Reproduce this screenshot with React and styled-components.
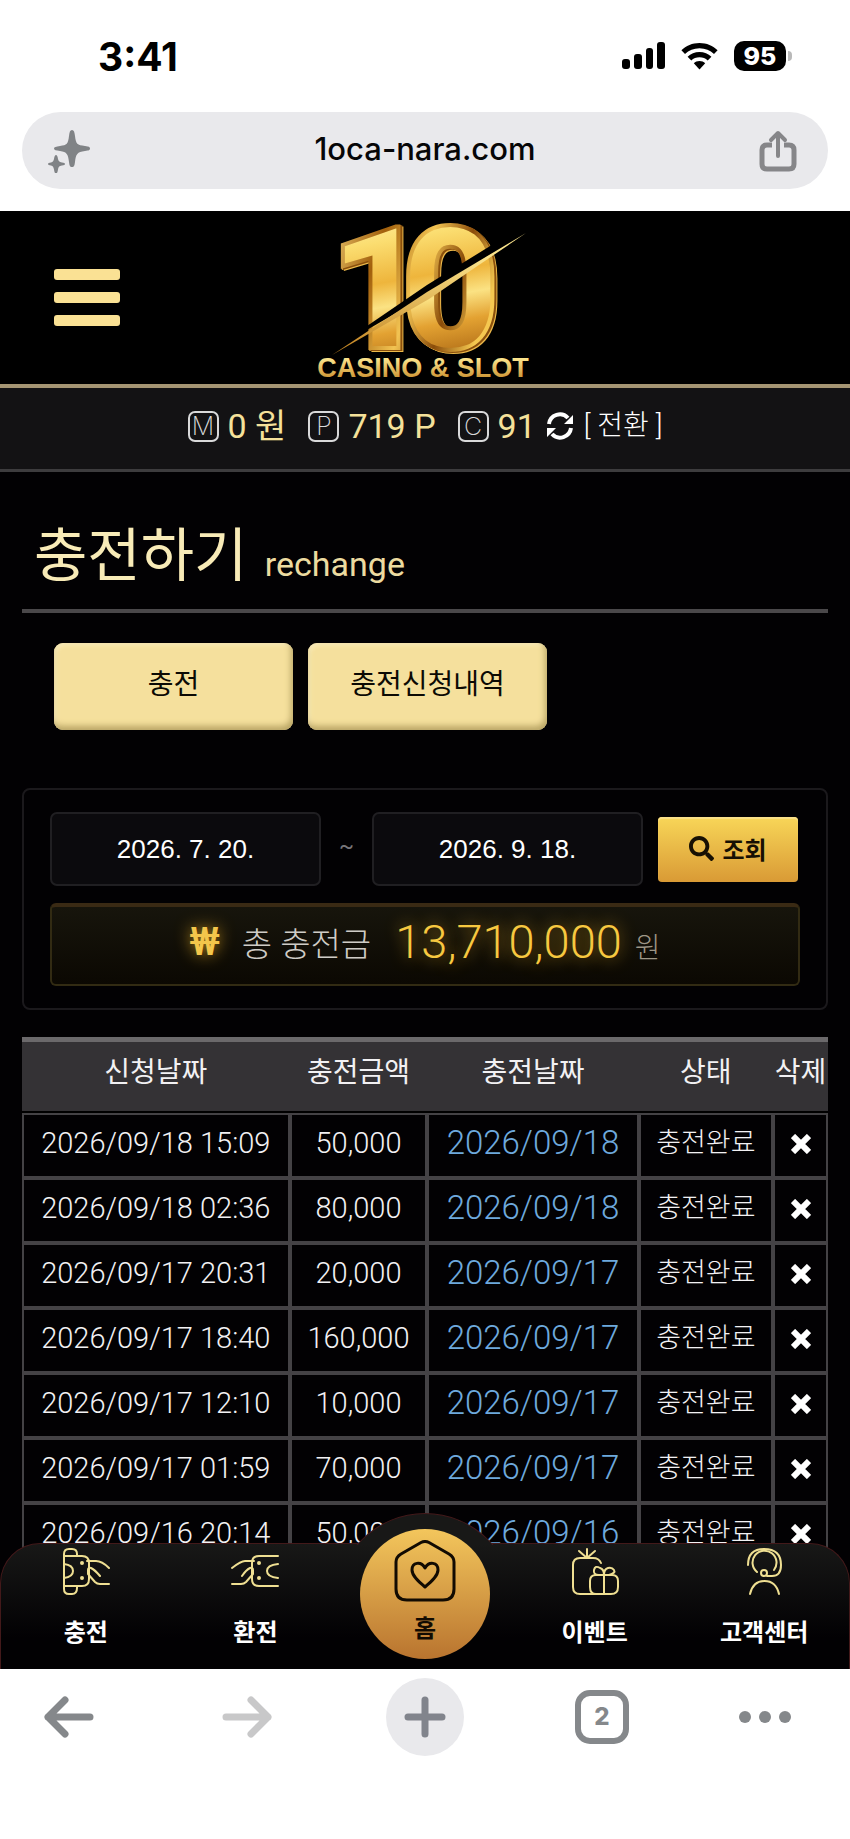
import styled, { createGlobalStyle } from 'styled-components'
import { FaSearch } from 'react-icons/fa'

const ROWS = [
  { requested: '2026/09/18 15:09', amount: '50,000', charged: '2026/09/18' },
  { requested: '2026/09/18 02:36', amount: '80,000', charged: '2026/09/18' },
  { requested: '2026/09/17 20:31', amount: '20,000', charged: '2026/09/17' },
  { requested: '2026/09/17 18:40', amount: '160,000', charged: '2026/09/17' },
  { requested: '2026/09/17 12:10', amount: '10,000', charged: '2026/09/17' },
  { requested: '2026/09/17 01:59', amount: '70,000', charged: '2026/09/17' },
  { requested: '2026/09/16 20:14', amount: '50,000', charged: '2026/09/16' },
]

const App = () => {
  return (
    <Screen>
      <GlobalStyle />
      <StatusBar />
      <AddressBar />
      <Viewport>
        <SiteHeader />
        <Balance />
        <main>
          <ChargePage />
        </main>
        <SiteNav />
      </Viewport>
      <BrowserToolbar />
    </Screen>
  )
}

const StatusBar = () => (
  <StatusRow>
    <Clock>3:41</Clock>
    <StatusIcons>
      <svg width="43" height="28" viewBox="0 0 43 28" fill="#000">
        <rect x="0" y="17" width="8" height="10" rx="3" />
        <rect x="12" y="12" width="8" height="15" rx="3" />
        <rect x="24" y="6" width="7" height="21" rx="3" />
        <rect x="35" y="0" width="8" height="27" rx="3" />
      </svg>
      <svg width="37" height="27" viewBox="0 0 37 27" fill="#000">
        <path d="M18.5 0C25.600 0 32 2.800 36.600 7.300L33 11C29.200 7.300 24.200 5.200 18.500 5.200S7.800 7.300 4 11L.4 7.300C5 2.800 11.400 0 18.500 0Z" />
        <path d="M18.500 9c4.600 0 8.800 1.800 11.900 4.700L26.700 17.400c-2.100-2-5-3.200-8.200-3.200s-6.100 1.200-8.200 3.200L6.600 13.700C9.700 10.800 13.900 9 18.500 9Z" />
        <path d="M18.500 18c2.200 0 4.200.8 5.700 2.200L18.500 26.500 12.800 20.200C14.300 18.800 16.300 18 18.500 18Z" />
      </svg>
      <Battery>95</Battery>
    </StatusIcons>
  </StatusRow>
)

const AddressBar = () => (
  <AddressWrap>
    <AddressPill>
      <IconBTN aria-label="AI">
        <svg width="44" height="44" viewBox="0 0 44 44" fill="#808386">
          <path d="M25 1C27 1 27.500 3 28 7c1 8 2 9 10 10 4 .5 5 1 5 2.500S42 21.500 38 22c-8 1-9 3-10 11-.5 4-1 5-3 5s-2.500-1-3-5c-1-8-2-10-9-11-4-.5-6-1-6-2.500S9 17.500 13 17c7-1 8-2 9-10 .5-4 1-6 3-6Z" />
          <path d="M9 26c1 0 1.500 1 2 4 .5 2 1 3 4 3.500 2 .3 3 .7 3 1.500s-1 1.200-3 1.500c-3 .5-3.500 1.500-4 4-.5 3-1 4-2 4s-1.500-1-2-4c-.5-2.500-1-3.500-3-4-2-.3-3-.7-3-1.500s1-1.200 3-1.500c2-.5 2.500-1.500 3-3.500.5-3 1-4 2-4Z" />
        </svg>
      </IconBTN>
      <Host>1oca-nara.com</Host>
      <IconBTN aria-label="공유">
        <svg width="38" height="42" viewBox="0 0 38 42" fill="none" stroke="#868689" strokeWidth="5" strokeLinecap="round" strokeLinejoin="round">
          <path d="M19 26V4M12 10L19 3L26 10" strokeWidth="4" />
          <path d="M13 15H8Q3 15 3 20V34Q3 39 8 39H30Q35 39 35 34V20Q35 15 30 15H25" strokeLinecap="butt" />
        </svg>
      </IconBTN>
    </AddressPill>
  </AddressWrap>
)

const SiteHeader = () => (
  <Header>
    <MenuBTN aria-label="메뉴">
      <MenuLine />
      <MenuLine />
      <MenuLine />
    </MenuBTN>
    <LogoLink href="#" aria-label="10 CASINO & SLOT">
      <Logo />
    </LogoLink>
  </Header>
)

const Logo = () => (
  <LogoSVG viewBox="0 0 220 164">
    <defs>
      <linearGradient id="face" x1="0" y1="0" x2="0.15" y2="1">
        <stop offset="0.1" stopColor="#fff3b0" />
        <stop offset="0.3" stopColor="#fbdd70" />
        <stop offset="0.5" stopColor="#eeb53c" />
        <stop offset="0.62" stopColor="#fbe283" />
        <stop offset="0.75" stopColor="#e3a232" />
        <stop offset="0.9" stopColor="#b8751b" />
      </linearGradient>
      <linearGradient id="rim" x1="0" y1="0" x2="1" y2="0.4">
        <stop offset="0" stopColor="#ffe389" />
        <stop offset="0.35" stopColor="#a2600c" />
        <stop offset="0.6" stopColor="#f2c352" />
        <stop offset="0.8" stopColor="#8a4c0a" />
        <stop offset="1" stopColor="#f5c850" />
      </linearGradient>
      <linearGradient id="caption" x1="0" y1="0" x2="0" y2="1">
        <stop offset="0.2" stopColor="#fbe48c" />
        <stop offset="1" stopColor="#c1801d" />
      </linearGradient>
    </defs>
    <Digits y="132" fill="url(#face)" stroke="url(#rim)" strokeWidth="4">
      <tspan x="14">1</tspan>
      <tspan x="86">0</tspan>
    </Digits>
    <path d="M14 136L112 69L206 11L206 19L112 79Z" fill="#000" />
    <path d="M17 139L112 76L211 17L114 83Z" fill="url(#caption)" />
    <Caption x="108" y="161" textAnchor="middle" fill="url(#caption)">CASINO &amp; SLOT</Caption>
  </LogoSVG>
)

const Balance = () => (
  <BalanceBar>
    <BalanceItem><Badge>M</Badge>0 원</BalanceItem>
    <BalanceItem><Badge>P</Badge>719 P</BalanceItem>
    <BalanceItem><Badge>C</Badge>91</BalanceItem>
    <ConvertBTN>
      <svg width="28" height="28" viewBox="0 0 28 28">
        <path d="M3 12A11 11 0 0 1 22 6M25 16A11 11 0 0 1 6 22" fill="none" stroke="#fff" strokeWidth="4" />
        <path d="M27 3V12H18ZM1 25V16H10Z" fill="#fff" />
      </svg>
      [ 전환 ]
    </ConvertBTN>
  </BalanceBar>
)

const ChargePage = () => (
  <Content>
    <PageTitle>
      충전하기 <small>rechange</small>
    </PageTitle>
    <Tabs>
      <TabBTN>충전</TabBTN>
      <TabBTN>충전신청내역</TabBTN>
    </Tabs>
    <SearchPanel>
      <SearchRow>
        <DateInput aria-label="시작일" defaultValue="2026. 7. 20." />
        <Tilde>~</Tilde>
        <DateInput aria-label="종료일" defaultValue="2026. 9. 18." />
        <SearchBTN><FaSearch size={25} />조회</SearchBTN>
      </SearchRow>
      <TotalBar>
        <WonSign>₩</WonSign>
        <TotalLabel>총 충전금</TotalLabel>
        <TotalValue>13,710,000</TotalValue>
        <TotalUnit>원</TotalUnit>
      </TotalBar>
    </SearchPanel>
    <HistoryTable>
      <colgroup>
        <col style={{ width: '33.2%' }} />
        <col style={{ width: '17.1%' }} />
        <col style={{ width: '26.2%' }} />
        <col style={{ width: '16.7%' }} />
        <col />
      </colgroup>
      <thead>
        <tr>
          <th>신청날짜</th>
          <th>충전금액</th>
          <th>충전날짜</th>
          <th>상태</th>
          <th>삭제</th>
        </tr>
      </thead>
      <tbody>
        {ROWS.map(row => (
          <tr key={row.requested}>
            <td>{row.requested}</td>
            <td>{row.amount}</td>
            <ChargedCell>{row.charged}</ChargedCell>
            <StatusCell>충전완료</StatusCell>
            <td>
              <DeleteBTN aria-label="삭제">
                <svg width="20" height="20" viewBox="0 0 20 20" stroke="#fff" strokeWidth="6">
                  <path d="M2 2L18 18M18 2L2 18" />
                </svg>
              </DeleteBTN>
            </td>
          </tr>
        ))}
      </tbody>
    </HistoryTable>
  </Content>
)

const SiteNav = () => (
  <Nav>
    <HomeBump />
    <NavLink href="#">
      <NavIcon viewBox="0 0 48 48">
        <path d="M2 6Q2 1 7 1H10Q15 1 15 6V8M2 6V41Q2 46 7 46H10Q15 46 15 40V38" />
        <path d="M2 8H20Q27 8 27 15V31Q27 38 20 38H2M2 16Q11 17 11 23T2 30" />
        <path d="M25 13H34Q40 13 47 20M26 22Q26 19 29 20Q33 22 38 28M26 22V26L33 34Q35 36 38 36H47" />
        <circle cx="20" cy="15" r="1" />
        <circle cx="20" cy="30" r="1" />
      </NavIcon>
      충전
    </NavLink>
    <NavLink href="#">
      <NavIcon viewBox="0 0 48 48">
        <path d="M47 8H28Q21 8 21 15V31Q21 38 28 38H47M47 16Q36 17 36 23T47 30" />
        <path d="M23 13H14Q10 13 1 20M22 22Q22 19 19 20Q15 22 11 28M22 22V26L15 34Q13 36 10 36H1" />
        <circle cx="28" cy="15" r="1" />
        <circle cx="28" cy="30" r="1" />
      </NavIcon>
      환전
    </NavLink>
    <HomeLink href="#">
      <svg width="62" height="62" viewBox="0 0 62 62" fill="none" stroke="#120b02" strokeWidth="3" strokeLinejoin="round">
        <path d="M27 2.500Q31 .5 35 2.500L55 14Q60 17 60 22V49Q60 60 49 60H13Q2 60 2 49V22Q2 17 7 14Z" />
        <path d="M31 47C25 42 18 36 18 30C18 22 27 21 31 28C35 21 44 22 44 30C44 36 37 42 31 47Z" />
      </svg>
      홈
    </HomeLink>
    <NavLink href="#">
      <NavIcon viewBox="0 0 48 48">
        <path d="M16 10V1M16 10L8 3M16 10L24 3M30 15Q28 10 22 10H9Q2 10 2 17V39Q2 46 9 46H40Q47 46 47 39V33Q47 27 41 27H25Q19 27 19 33V39Q19 46 25 46M33 27V46" />
        <path d="M33 27H28Q22 27 23 22T29 20Q33 21 33 27Q33 21 37 20T43 22T38 27" />
      </NavIcon>
      이벤트
    </NavLink>
    <NavLink href="#">
      <NavIcon viewBox="0 0 48 48">
        <path d="M8 17Q8 1 24 1Q41 1 41 17Q41 28 32 28H27" />
        <path d="M17 24A12 12 0 1 1 34 22" />
        <circle cx="24" cy="25" r="3" />
        <path d="M10 46Q13 33 24.500 33T39 46" />
      </NavIcon>
      고객센터
    </NavLink>
  </Nav>
)

const BrowserToolbar = () => (
  <Toolbar>
    <ToolBTN aria-label="뒤로">
      <svg width="50" height="42" viewBox="0 0 50 42" fill="none" stroke="#85888b" strokeWidth="7" strokeLinecap="round" strokeLinejoin="round">
        <path d="M46 21H4M21 4L4 21L21 38" />
      </svg>
    </ToolBTN>
    <ToolBTN aria-label="앞으로">
      <svg width="50" height="42" viewBox="0 0 50 42" fill="none" stroke="#c8c8c9" strokeWidth="7" strokeLinecap="round" strokeLinejoin="round">
        <path d="M4 21H46M29 4L46 21L29 38" />
      </svg>
    </ToolBTN>
    <ToolBTN aria-label="새 탭">
      <PlusCircle>
        <svg width="42" height="42" viewBox="0 0 42 42" fill="none" stroke="#81848c" strokeWidth="7" strokeLinecap="round">
          <path d="M21 4V38M4 21H38" />
        </svg>
      </PlusCircle>
    </ToolBTN>
    <ToolBTN aria-label="탭"><TabCount>2</TabCount></ToolBTN>
    <ToolBTN aria-label="더보기">
      <svg width="52" height="12" viewBox="0 0 52 12" fill="#85888b">
        <circle cx="6" cy="6" r="6" />
        <circle cx="26" cy="6" r="6" />
        <circle cx="46" cy="6" r="6" />
      </svg>
    </ToolBTN>
  </Toolbar>
)

const GlobalStyle = createGlobalStyle`
  * {
    box-sizing: border-box;
  }

  body {
    margin: 0;
    background-color: #fff;
    font-family: Roboto, "Noto Sans CJK KR", sans-serif;
  }

  button {
    padding: 0;
    border: none;
    background: none;
    font-family: inherit;
    cursor: pointer;
  }

  a {
    color: inherit;
    text-decoration: none;
  }

  svg {
    display: block;
  }
`

const Screen = styled.div`
  display: flex;
  flex-direction: column;
  min-height: 100vh;
`

const StatusRow = styled.div`
  display: flex;
  justify-content: space-between;
  align-items: center;
  height: 112px;
  padding: 0 58px 0 98px;
`

const Clock = styled.span`
  font: 700 39px/1 Inter, sans-serif;
  color: #000;
`

const StatusIcons = styled.div`
  display: flex;
  align-items: center;
  gap: 16px;
`

const Battery = styled.span`
  position: relative;
  width: 52px;
  margin-right: 6px;
  border-radius: 10px;
  background-color: #000;
  color: #fff;
  font: 800 25px/30px Inter, sans-serif;
  text-align: center;

  &::after {
    content: '';
    position: absolute;
    right: -6px;
    top: 10px;
    width: 4px;
    height: 10px;
    border-radius: 0 4px 4px 0;
    background-color: #b9b9b9;
  }
`

const AddressWrap = styled.div`
  padding: 0 22px 22px;
`

const AddressPill = styled.div`
  display: flex;
  justify-content: space-between;
  align-items: center;
  height: 77px;
  padding: 0 31px 0 25px;
  border-radius: 39px;
  background-color: #e9e9ec;
`

const IconBTN = styled.button`
  flex: none;
`

const Host = styled.span`
  padding-bottom: 4px;
  font: 500 31px/1 Inter, sans-serif;
  color: #060607;
`

const Viewport = styled.div`
  position: relative;
  flex: 1;
  overflow: hidden;
  background-color: #020103;
`

const Header = styled.header`
  display: grid;
  grid-template-columns: 1fr auto 1fr;
  align-items: center;
  height: 177px;
  padding: 0 54px;
  border-bottom: 4px solid #a59573;
  background-color: #000;
`

const MenuBTN = styled.button`
  display: flex;
  flex-direction: column;
  gap: 12px;
  width: 66px;
`

const MenuLine = styled.span`
  height: 11px;
  border-radius: 3px;
  background-color: #fae194;
`

const LogoLink = styled.a`
  grid-column: 2;
`

const LogoSVG = styled.svg`
  width: 220px;
  height: 164px;
  overflow: visible;
`

const Digits = styled.text`
  font: 900 170px Roboto, sans-serif;
  filter: drop-shadow(2px 1px 0 #8a500d) drop-shadow(1px 1px 0 #edb94a);
`

const Caption = styled.text`
  font: 700 27px "Liberation Sans", sans-serif;
`

const BalanceBar = styled.div`
  display: flex;
  justify-content: center;
  align-items: flex-start;
  gap: 22px;
  height: 84px;
  padding-top: 18px;
  border-bottom: 3px solid #3d3c3e;
  background-color: #131214;
  color: #f5e19a;
  font-size: 34px;
  line-height: 40px;
`

const BalanceItem = styled.span`
  display: flex;
  align-items: center;
  gap: 9px;
`

const Badge = styled.span`
  width: 31px;
  height: 31px;
  border: 2px solid #d9d9da;
  border-radius: 7px;
  color: #d9d9da;
  font: 200 25px/27px Inter, sans-serif;
  text-align: center;
`

const ConvertBTN = styled.button`
  display: flex;
  align-items: center;
  gap: 10px;
  margin-left: -12px;
  color: #fff;
  font-size: 28px;
  font-weight: 300;
  line-height: 40px;
`

const Content = styled.div`
  padding: 40px 22px 80px;
`

const PageTitle = styled.h1`
  margin: 0;
  padding: 0 12px;
  border-bottom: 4px solid #4a484a;
  color: #f8ebb7;
  font-size: 58px;
  font-weight: 400;
  line-height: 89px;

  small {
    margin-left: 3px;
    font-size: 34px;
    color: #ecdba0;
  }
`

const Tabs = styled.div`
  display: flex;
  gap: 15px;
  padding: 30px 32px 58px;
`

const TabBTN = styled.button`
  width: 239px;
  height: 87px;
  padding-bottom: 10px;
  border-radius: 9px;
  background-color: #f5e09d;
  box-shadow: inset -2px -4px 6px #b9a565, inset 2px 2px 4px #fbeec0;
  color: #0c0a04;
  font-size: 28px;
`

const SearchPanel = styled.section`
  padding: 22px 26px;
  border: 2px solid #1b191c;
  border-radius: 8px;
`

const SearchRow = styled.div`
  display: flex;
  align-items: center;
`

const DateInput = styled.input`
  flex: 1;
  min-width: 0;
  height: 74px;
  border: 2px solid #201f22;
  border-radius: 7px;
  background-color: #0b0a0d;
  color: #fff;
  font: 26px "Liberation Sans", sans-serif;
  text-align: center;
`

const Tilde = styled.span`
  width: 51px;
  padding-bottom: 8px;
  color: #77767a;
  font-size: 22px;
  text-align: center;
`

const SearchBTN = styled.button`
  display: flex;
  justify-content: center;
  align-items: center;
  gap: 8px;
  width: 140px;
  height: 65px;
  margin: 0 2px 0 15px;
  padding-bottom: 2px;
  border-radius: 4px;
  background: linear-gradient(#f8d658, #d99a35);
  box-shadow: inset 0 2px 1px #fae08a;
  color: #171003;
  font-size: 24px;
  font-weight: 700;
`

const TotalBar = styled.div`
  display: flex;
  justify-content: center;
  align-items: center;
  height: 83px;
  margin-top: 17px;
  padding-bottom: 8px;
  border: 2px solid #322b13;
  border-top: 4px solid #3a2a14;
  border-radius: 6px;
  background: linear-gradient(#17150c, #0b0802);
`

const WonSign = styled.span`
  margin-right: 22px;
  color: #f3c64b;
  font-size: 39px;
  font-weight: 500;
  text-shadow: 0 0 16px #b98a1c;
`

const TotalLabel = styled.span`
  margin-right: 24px;
  color: #cfccc6;
  font-size: 33px;
  font-weight: 300;
`

const TotalValue = styled.strong`
  color: #f7c840;
  font-size: 47px;
  font-weight: 300;
  text-shadow: 0 0 16px #b98a1c;
`

const TotalUnit = styled.span`
  margin: 8px 0 0 13px;
  color: #9d9686;
  font-size: 28px;
  font-weight: 300;
`

const HistoryTable = styled.table`
  width: 100%;
  margin-top: 27px;
  border-collapse: separate;
  border-spacing: 0;
  table-layout: fixed;
  color: #f2f1f3;

  th {
    height: 76px;
    padding: 0 0 8px;
    border-top: 5px solid #6b696b;
    border-bottom: 2px solid #000;
    background-color: #343235;
    font-size: 28px;
    font-weight: 400;
    line-height: 40px;
    white-space: nowrap;
  }

  td {
    height: 65px;
    padding: 0 0 6px;
    border: 2px solid #444245;
    font-size: 29px;
    font-weight: 300;
    line-height: 40px;
    text-align: center;
    white-space: nowrap;
  }
`

const ChargedCell = styled.td`
  && {
    color: #6ea9dd;
    font-size: 33px;
  }
`

const StatusCell = styled.td`
  && {
    font-size: 27px;
  }
`

const DeleteBTN = styled.button`
  display: block;
  margin: 2px auto 0;
`

const Nav = styled.nav`
  position: absolute;
  right: 0;
  bottom: 0;
  left: 0;
  display: grid;
  grid-template-columns: repeat(5, 1fr);
  height: 126px;
  border: 1px solid #43191a;
  border-bottom: none;
  border-radius: 40px 40px 0 0;
  background: linear-gradient(#181817, #020103 75%);
  color: #fff;
  font-size: 24px;
  font-weight: 700;
  line-height: 36px;
`

const NavLink = styled.a`
  display: flex;
  flex-direction: column;
  align-items: center;
  gap: 19px;
  padding-top: 4px;
`

const NavIcon = styled.svg`
  width: 48px;
  height: 48px;
  fill: none;
  stroke: #efdf92;
  stroke-width: 2;
  stroke-linecap: round;
  stroke-linejoin: round;
`

/* dark ring that rises over the bar behind the home button */
const HomeBump = styled.span`
  position: absolute;
  top: -31px;
  left: 50%;
  width: 180px;
  height: 80px;
  transform: translateX(-50%);
  clip-path: inset(0 0 48px 0);

  &::before {
    content: '';
    display: block;
    height: 180px;
    border: 1px solid #43191a;
    border-radius: 50%;
    background-color: #181817;
  }
`

const HomeLink = styled.a`
  position: relative;
  display: flex;
  flex-direction: column;
  justify-self: center;
  align-items: center;
  gap: 9px;
  width: 130px;
  height: 130px;
  margin-top: -15px;
  padding-top: 11px;
  border-radius: 50%;
  background: linear-gradient(#f3c65c, #b9742f);
  color: #120b02;
`

const Toolbar = styled.div`
  display: grid;
  grid-template-columns: 138fr 218fr 138fr 216fr 110fr;
  justify-items: center;
  height: 170px;
  padding: 8px 30px 0 0;
`

const ToolBTN = styled.button`
  display: grid;
  place-items: center;
  width: 80px;
  height: 80px;
`

const PlusCircle = styled.span`
  display: grid;
  place-items: center;
  width: 78px;
  height: 78px;
  border-radius: 50%;
  background-color: #e9e9ec;
`

const TabCount = styled.span`
  width: 54px;
  height: 54px;
  border: 6px solid #85888b;
  border-radius: 15px;
  color: #85888b;
  font: 800 24px/42px Inter, sans-serif;
`

export default App
